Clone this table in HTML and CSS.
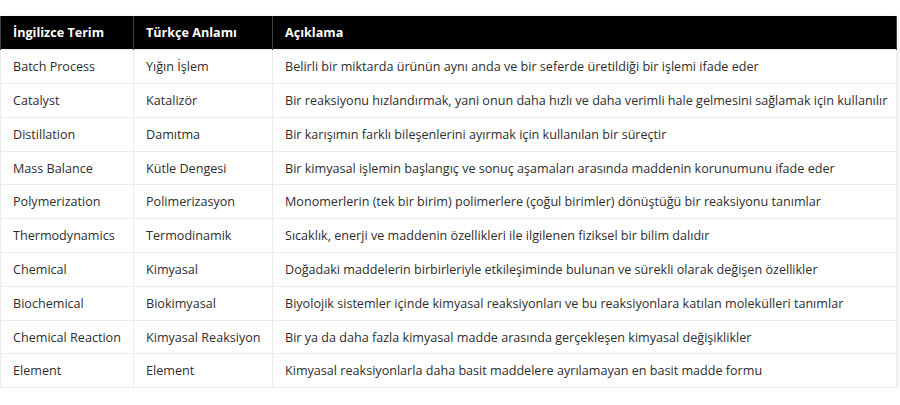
FILE: index.html
```html
<!DOCTYPE html>
<html lang="tr">
<head>
<meta charset="utf-8">
<link rel="stylesheet" href="styles.css">
</head>
<body>
<div class="wrap">
<table class="terms">
<colgroup><col class="c1"><col class="c2"><col class="c3"></colgroup>
<thead>
<tr><th>İngilizce Terim</th><th>Türkçe Anlamı</th><th>Açıklama</th></tr>
</thead>
<tbody>
<tr><td>Batch Process</td><td>Yığın İşlem</td><td>Belirli bir miktarda ürünün aynı anda ve bir seferde üretildiği bir işlemi ifade eder</td></tr>
<tr><td>Catalyst</td><td>Katalizör</td><td>Bir reaksiyonu hızlandırmak, yani onun daha hızlı ve daha verimli hale gelmesini sağlamak için kullanılır</td></tr>
<tr><td>Distillation</td><td>Damıtma</td><td>Bir karışımın farklı bileşenlerini ayırmak için kullanılan bir süreçtir</td></tr>
<tr><td>Mass Balance</td><td>Kütle Dengesi</td><td>Bir kimyasal işlemin başlangıç ve sonuç aşamaları arasında maddenin korunumunu ifade eder</td></tr>
<tr><td>Polymerization</td><td>Polimerizasyon</td><td>Monomerlerin (tek bir birim) polimerlere (çoğul birimler) dönüştüğü bir reaksiyonu tanımlar</td></tr>
<tr><td>Thermodynamics</td><td>Termodinamik</td><td>Sıcaklık, enerji ve maddenin özellikleri ile ilgilenen fiziksel bir bilim dalıdır</td></tr>
<tr><td>Chemical</td><td>Kimyasal</td><td>Doğadaki maddelerin birbirleriyle etkileşiminde bulunan ve sürekli olarak değişen özellikler</td></tr>
<tr><td>Biochemical</td><td>Biokimyasal</td><td>Biyolojik sistemler içinde kimyasal reaksiyonları ve bu reaksiyonlara katılan molekülleri tanımlar</td></tr>
<tr><td>Chemical Reaction</td><td>Kimyasal Reaksiyon</td><td>Bir ya da daha fazla kimyasal madde arasında gerçekleşen kimyasal değişiklikler</td></tr>
<tr><td>Element</td><td>Element</td><td>Kimyasal reaksiyonlarla daha basit maddelere ayrılamayan en basit madde formu</td></tr>
</tbody>
</table>
</div>
</body>
</html>
```
FILE: styles.css
```css
html, body {
  margin: 0;
  padding: 0;
  background: #fff;
}
.wrap {
  padding: 16px 3px 0 0;
}
.terms {
  width: 897px;
  border-collapse: collapse;
  table-layout: fixed;
  font-family: "Open Sans", "Noto Sans", sans-serif;
  font-size: 12.6px;
  color: #2e2e2e;
  box-shadow: 0 2px 6px rgba(0,0,0,0.12);
}
.c1 { width: 133px; }
.c2 { width: 139px; }
.terms th, .terms td {
  text-align: left;
  padding: 0 12px;
  height: 33.8px;
  white-space: nowrap;
  box-sizing: border-box;
}
.terms th {
  background: #000;
  color: #fff;
  font-weight: 700;
  border-left: 1px solid #444;
  border-right: 1px solid #444;
}
.terms td {
  border: 1px solid #ececec;
  background: #fff;
}
```
